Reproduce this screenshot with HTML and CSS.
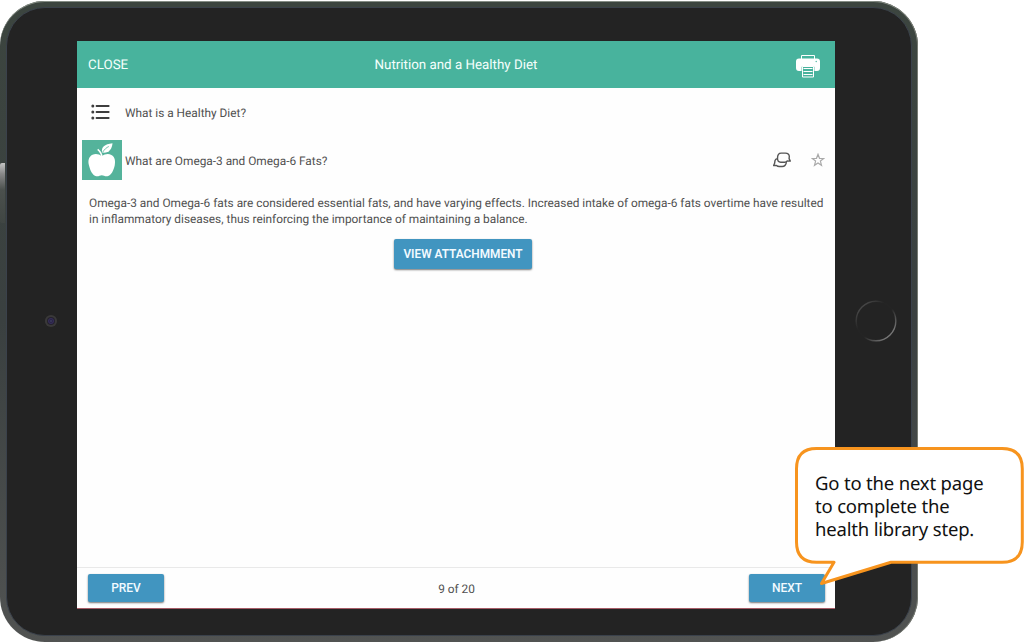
FILE: index.html
```html
<!DOCTYPE html>
<html lang="en">
<head>
<meta charset="utf-8">
<title>Nutrition and a Healthy Diet</title>
<link rel="stylesheet" href="styles.css">
</head>
<body>
<div class="stage">
  <div class="side-button"></div>
  <div class="tablet">
    <div class="bezel">
      <div class="left-rim">
        <svg class="camera" width="14" height="14" viewBox="0 0 14 14"><circle cx="7" cy="7" r="6.1" fill="#3a3939"/><circle cx="7" cy="7" r="4" fill="#25222d"/><circle cx="7" cy="7" r="2.6" fill="#2b2447" stroke="#3b3264" stroke-width=".7"/><circle cx="7" cy="7" r=".8" fill="#42496b"/></svg>
      </div>
      <main class="screen">
        <header class="topbar">
          <span class="close">CLOSE</span>
          <span class="title">Nutrition and a Healthy Diet</span>
          <svg class="printer" width="24" height="24" viewBox="0 0 24 24"><path d="M5.500 5V1.500h13V5" fill="none" stroke="#fff" stroke-width="1"/><path d="M3 4.500h18q3 0 3 3v6.500q0 3-3 3h-2.600v-4.200H5.600V17H3q-3 0-3-3V7.500q0-3 3-3z" fill="#fff"/><path d="M6.500 12.500h11v10.500h-11z" fill="#48b39d" stroke="#fff" stroke-width="1"/><path d="M7.500 14.500h9M7.500 17.500h9M7.500 20.500h9" stroke="#fff" stroke-width="1"/><circle cx="20.200" cy="7.500" r=".7" fill="#48b39d"/></svg>
        </header>
        <div class="row contents">
          <svg class="list" width="20" height="16" viewBox="0 0 20 16"><g fill="#3e3e3e"><circle cx="1.800" cy="2" r="1.500"/><circle cx="1.800" cy="8" r="1.500"/><circle cx="1.800" cy="14" r="1.500"/></g><path d="M5.500 2h12.200M5.500 8h12.200M5.500 14h12.200" stroke="#3e3e3e" stroke-width="1.800" stroke-linecap="round"/></svg>
          <span>What is a Healthy Diet?</span>
        </div>
        <div class="row topic">
          <svg class="apple" width="40" height="40" viewBox="0 0 40 40"><path fill="#54b39b" d="M0 0h40v40H0z"/><path fill="#fff" d="M19.800 16.200C17 14 13.500 13.300 10.500 14.800C6.500 16.800 5.800 21 7 25.500C8.200 30.500 10.600 35.500 14.200 36.200C16.500 36.700 18 35.200 19.800 35.200S23.200 36.700 25.500 36.200C29.200 35.500 31.700 30.300 32.700 25.500C33.600 21 33 17 29.400 15C26.400 13.400 22.600 14.100 19.800 16.200z"/><path fill="#fff" d="M20.200 12.500C18.800 7.500 22.500 4 30.500 3.200C30 9.500 26.500 13.500 20.200 12.500z"/><path d="M20.800 12C22.300 9.500 24.500 7.500 26.800 6.500" fill="none" stroke="#54b39b" stroke-width=".8"/><path d="M20 17C19.600 13.800 18.300 11.300 15.700 9.300" fill="none" stroke="#fff" stroke-width="1.500"/></svg>
          <span>What are Omega-3 and Omega-6 Fats?</span>
          <svg class="chat" width="18" height="16" viewBox="0 0 18 16"><g fill="none" stroke="#555" stroke-width="1.400" stroke-linejoin="round"><path d="M8.200 1.100h4.200q3.700 0 3.900 3.200l-.2 2.300 1.200 2.500-3.100-.1q-1 1.200-2.400 1.200H7.700q-3.200 0-3.200-3.900 0-5.200 3.700-5.200z"/><path d="M4.400 6.700Q2.400 6.700 2 8.700L1.600 11.300.6 13.500h2.900q1 1 2.800 1h2.900q3.600 0 4.200-4.400"/></g></svg>
          <svg class="star" width="14" height="14" viewBox="0 0 14 14"><path d="M7 1.300 8.500 5.300 12.700 5.500 9.400 8.100 10.500 12.300 7 9.900 3.500 12.300 4.600 8.100 1.300 5.500 5.500 5.300z" fill="none" stroke="#aaa" stroke-width="1.200"/></svg>
        </div>
        <article class="body">
          <p>Omega-3 and Omega-6 fats are considered essential fats, and have varying effects. Increased intake of omega-6 fats overtime have resulted<br>in inflammatory diseases, thus reinforcing the importance of maintaining a balance.</p>
          <button class="btn attach">VIEW ATTACHMMENT</button>
        </article>
        <footer class="pager">
          <button class="btn">PREV</button>
          <span>9 of 20</span>
          <button class="btn">NEXT</button>
        </footer>
      </main>
      <div class="right-rim">
        <svg class="home" width="44" height="44" viewBox="0 0 44 44"><defs><linearGradient id="ring" x1="0" y1="0" x2="1" y2="1"><stop offset="0" stop-color="#5c5c5c"/><stop offset=".37" stop-color="#242424"/><stop offset=".55" stop-color="#242424"/><stop offset=".9" stop-color="#858585"/></linearGradient></defs><circle cx="22" cy="22" r="19.800" fill="none" stroke="url(#ring)" stroke-width="1.400"/></svg>
      </div>
    </div>
  </div>
  <aside class="callout">
    <svg class="bubble" width="229" height="140" viewBox="0 0 229 140"><path d="M21.500 1.500H207q20.300 0 20.300 20.300V95q0 20.300-20.300 20.300H96L26.500 136.500 39 115.300H21.500Q1.500 115.300 1.500 95V21.800Q1.500 1.500 21.500 1.500z" fill="#fff" stroke="#f7941e" stroke-width="3" stroke-linejoin="round"/></svg>
    <p class="hint">Go to the next page<br>to complete the<br>health library step.</p>
  </aside>
</div>
</body>
</html>
```
FILE: styles.css
```css
* { box-sizing: border-box; }
body { margin: 0; background: #fff; font-family: Roboto, sans-serif; overflow: hidden; text-rendering: geometricPrecision; }
p { margin: 0; }
.stage { position: relative; width: 1024px; height: 643px; padding-top: 1px; overflow: hidden; }
.side-button { position: absolute; left: 0; top: 163px; width: 5px; height: 60px; border-radius: 2px 0 0 2px; background: linear-gradient(#c4c4c4, #888 18%, #4b504d 45%, #404643); z-index: 1; }
.tablet { width: 918px; height: 641px; padding: 6px; border-radius: 45px; background: linear-gradient(#3c453f, #3a4040 50%, #515352); box-shadow: inset -1px 0 #777b73, inset 0 1px #858d85; }
.bezel { display: flex; height: 100%; padding: 33px 0 0; border: 1px solid #3a414b; border-radius: 39px; background: #232323; }
.left-rim { display: flex; width: 70px; padding: 273px 0 0 37px; }
.right-rim { padding: 258px 0 0 19px; }
.screen { display: flex; flex-direction: column; width: 758px; height: 568px; flex: none; background: #fefefe; border-bottom: 1px solid #a65b66; color: #505050; font-size: 11.850px; }
.topbar { display: grid; grid-template-columns: 60px 1fr 60px; align-items: center; height: 47px; background: #48b39d; color: #f5fffc; font-size: 13.350px; }
.close { padding-left: 11px; }
.title { text-align: center; }
.topbar span { margin-top: 1px; }
.printer { justify-self: end; margin: 2px 15px 0 0; }
.row { display: flex; align-items: center; }
.contents { height: 49px; padding-left: 14px; gap: 14px; }
.list { margin-top: -1px; }
.row span { margin-top: 1px; }
.topic { height: 46px; padding: 0 10px 0 5px; gap: 3px; }
.chat { margin-left: auto; margin-right: 17px; }
.body { display: flex; flex-direction: column; align-items: center; flex: 1; padding: 12px 10px 0 12px; }
.body p { align-self: stretch; line-height: 16px; white-space: nowrap; }
.btn { display: block; width: 76px; height: 28px; margin-top: -1px; padding: 0; border: 0; border-radius: 2px; background: #4195c0; box-shadow: 0 1px 2px #0008; color: #f2faff; font: 500 12px Roboto, sans-serif; }
.attach { width: 138px; height: 30px; margin: 12px 0 0 12px; font-weight: 600; font-size: 11.850px; }
.pager { display: flex; align-items: center; justify-content: space-between; height: 41px; padding: 1px 10px 0 11px; border-top: 1px solid #e9e9e9; }
.callout { position: absolute; left: 795px; top: 447px; width: 229px; height: 140px; }
.bubble { position: absolute; left: 0; top: 0; }
.hint { position: relative; padding: 25px 0 0 20px; color: #111; font: 18.500px/23px "Noto Sans", sans-serif; letter-spacing: -.18px; white-space: nowrap; }
```
